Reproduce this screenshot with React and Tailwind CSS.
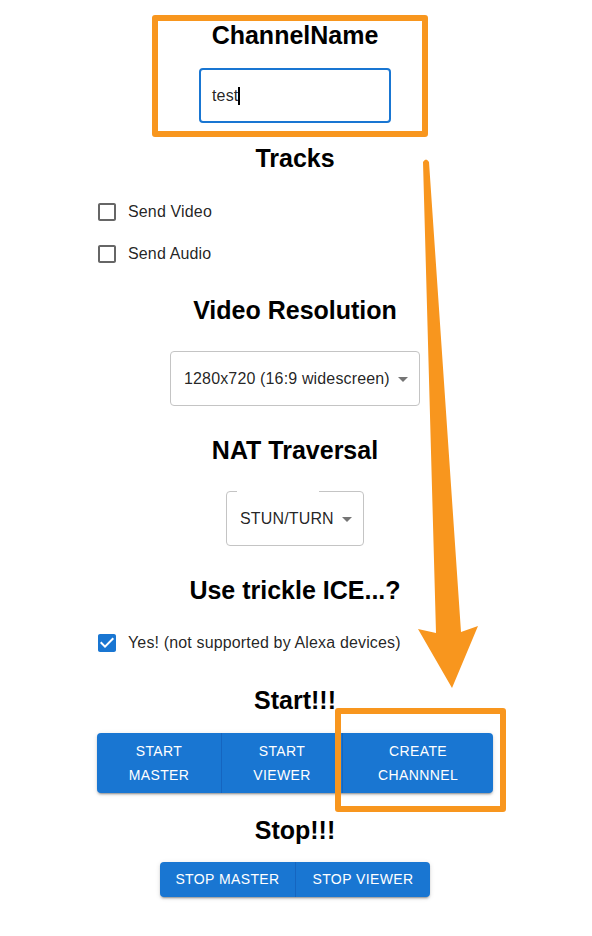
import React from "react";

const font = { fontFamily: '"Liberation Sans", Arial, sans-serif' };

function Heading({ children, className = "" }) {
  return (
    <h2 className={`text-[25px] leading-[30px] font-bold text-black text-center ${className}`}>
      {children}
    </h2>
  );
}

function CheckIcon({ checked }) {
  return checked ? (
    <svg width="24" height="24" viewBox="0 0 24 24" className="shrink-0">
      <path
        fill="#1976d2"
        d="M19 3H5c-1.11 0-2 .9-2 2v14c0 1.1.89 2 2 2h14c1.11 0 2-.9 2-2V5c0-1.1-.89-2-2-2zm-9 14l-5-5 1.41-1.41L10 14.17l7.59-7.59L19 8l-9 9z"
      />
    </svg>
  ) : (
    <svg width="24" height="24" viewBox="0 0 24 24" className="shrink-0">
      <path
        fill="rgba(0,0,0,0.6)"
        d="M19 5v14H5V5h14m0-2H5c-1.1 0-2 .9-2 2v14c0 1.1.9 2 2 2h14c1.1 0 2-.9 2-2V5c0-1.1-.9-2-2-2z"
      />
    </svg>
  );
}

function CheckRow({ label, checked, className = "" }) {
  return (
    <div className={`w-full h-[42px] flex items-center pl-[95px] gap-[9px] ${className}`}>
      <CheckIcon checked={checked} />
      <span className="text-[16px] tracking-[0.15px] text-[rgba(0,0,0,0.87)]">{label}</span>
    </div>
  );
}

function Arrow() {
  return (
    <svg width="24" height="24" viewBox="0 0 24 24" className="shrink-0">
      <path fill="rgba(0,0,0,0.54)" d="M7 10l5 5 5-5z" />
    </svg>
  );
}

function Select({ value, width, notch }) {
  return (
    <div
      className={`relative h-[55px] border border-[#c4c4c4] rounded-[4px] flex items-center pl-[13px] pr-[7px] gap-[1px] ${width}`}
    >
      {notch}
      <span className="text-[16px] tracking-[0.15px] text-[rgba(0,0,0,0.87)] whitespace-nowrap">
        {value}
      </span>
      <Arrow />
    </div>
  );
}

const shadow =
  "shadow-[0px_3px_1px_-2px_rgba(0,0,0,0.2),0px_2px_2px_0px_rgba(0,0,0,0.14),0px_1px_5px_0px_rgba(0,0,0,0.12)]";

export default function App() {
  return (
    <div className="relative w-[592px] h-[936px] bg-white overflow-hidden" style={font}>
      <div className="w-[590px] flex flex-col items-center">
        <Heading className="mt-[20px]">ChannelName</Heading>
        <div className="mt-[18px] w-[192px] h-[55px] border-2 border-[#1976d2] rounded-[4px] flex items-center pl-[11px]">
          <span className="text-[16px] tracking-[0.15px] text-[rgba(0,0,0,0.87)]">test</span>
          <span className="w-[2px] h-[18px] bg-black" />
        </div>

        <Heading className="mt-[20px]">Tracks</Heading>
        <CheckRow className="mt-[18px]" label="Send Video" />
        <CheckRow label="Send Audio" />

        <Heading className="mt-[20px]">Video Resolution</Heading>
        <div className="mt-[26px]">
          <Select value="1280x720 (16:9 widescreen)" width="w-[250px]" />
        </div>

        <Heading className="mt-[29px]">NAT Traversal</Heading>
        <div className="mt-[26px]">
          <Select
            value="STUN/TURN"
            width="w-[138px]"
            notch={<span className="absolute top-[-1px] left-[10px] w-[82px] h-[2px] bg-white" />}
          />
        </div>

        <Heading className="mt-[29px]">Use trickle ICE...?</Heading>
        <CheckRow className="mt-[17px]" label="Yes! (not supported by Alexa devices)" checked />

        <Heading className="mt-[21px]">Start!!!</Heading>
        <div className={`mt-[18px] flex h-[60px] rounded-[4px] bg-[#1976d2] ${shadow}`}>
          {[
            ["START", "MASTER", "w-[125px] border-r border-[#1565c0]"],
            ["START", "VIEWER", "w-[121px] border-r border-[#1565c0]"],
            ["CREATE", "CHANNNEL", "w-[150px]"],
          ].map(([a, b, cls]) => (
            <div
              key={b}
              className={`flex flex-col items-center justify-center text-white text-[14px] leading-[24px] tracking-[0.4px] ${cls}`}
            >
              <span>{a}</span>
              <span>{b}</span>
            </div>
          ))}
        </div>

        <Heading className="mt-[22px]">Stop!!!</Heading>
        <div className={`mt-[17px] flex h-[35px] rounded-[4px] bg-[#1976d2] ${shadow}`}>
          <div className="w-[136px] border-r border-[#1565c0] flex items-center justify-center text-white text-[14px] tracking-[0.4px]">
            STOP MASTER
          </div>
          <div className="w-[134px] flex items-center justify-center text-white text-[14px] tracking-[0.4px]">
            STOP VIEWER
          </div>
        </div>
      </div>

      {/* annotation overlays */}
      <div className="absolute left-[152px] top-[15px] w-[276px] h-[122px] border-[6px] border-[#f8961e] rounded-[3px] pointer-events-none" />
      <div className="absolute left-[335px] top-[708px] w-[171px] h-[104px] border-[6px] border-[#f8961e] rounded-[3px] pointer-events-none" />
      <svg
        className="absolute left-0 top-0 pointer-events-none"
        width="592"
        height="936"
        viewBox="0 0 592 936"
      >
        <path
          fill="#f8961e"
          d="M423 162 Q426 157 429 162 L461 632 L478 626 L452 688 L418 629 L436 633 Z"
        />
      </svg>
    </div>
  );
}
